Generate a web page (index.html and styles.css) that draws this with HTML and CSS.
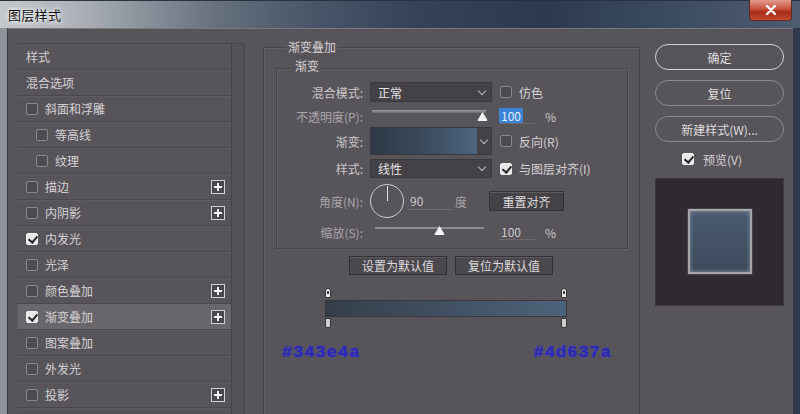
FILE: index.html
```html
<!DOCTYPE html>
<html lang="zh">
<head>
<meta charset="utf-8">
<title>图层样式</title>
<link rel="stylesheet" href="styles.css">
</head>
<body>
<div class="win">
  <div class="titlebar">
    <span class="title">图层样式</span>
    <span class="close"><svg width="12" height="10" viewBox="0 0 12 10"><path d="M2 1 L10 9 M10 1 L2 9" stroke="#fff" stroke-width="2.4" stroke-linecap="round"/></svg></span>
  </div>
  <div class="frame">
    <div class="dlg">
      <div class="leftpane">
        <div class="list">
          <div class="row plain">样式</div>
          <div class="row plain">混合选项</div>
          <div class="row"><span class="cb"></span><span>斜面和浮雕</span></div>
          <div class="row sub"><span class="cb"></span><span>等高线</span></div>
          <div class="row sub"><span class="cb"></span><span>纹理</span></div>
          <div class="row"><span class="cb"></span><span>描边</span><span class="plus"></span></div>
          <div class="row"><span class="cb"></span><span>内阴影</span><span class="plus"></span></div>
          <div class="row"><span class="cb on"></span><span>内发光</span></div>
          <div class="row"><span class="cb"></span><span>光泽</span></div>
          <div class="row"><span class="cb"></span><span>颜色叠加</span><span class="plus"></span></div>
          <div class="row sel"><span class="cb on"></span><span>渐变叠加</span><span class="plus"></span></div>
          <div class="row"><span class="cb"></span><span>图案叠加</span></div>
          <div class="row"><span class="cb"></span><span>外发光</span></div>
          <div class="row"><span class="cb"></span><span>投影</span><span class="plus"></span></div>
        </div>
        <div class="track"></div>
      </div>

      <div class="main">
        <div class="legend outer-legend">渐变叠加</div>
        <div class="inner">
          <div class="legend inner-legend">渐变</div>
          <div class="form">
            <div class="lbl r1">混合模式:</div>
            <div class="select r1"><span>正常</span><span class="chev"></span></div>
            <div class="opt r1"><span class="cb"></span><span>仿色</span></div>

            <div class="lbl r2">不透明度(P):</div>
            <div class="slider r2"><span class="rail"></span><span class="thumb thumb-op"></span></div>
            <div class="num r2"><span class="numfield"><span class="hl">100</span></span><span class="pct">%</span></div>

            <div class="lbl r3">渐变:</div>
            <div class="gradsel r3"><span class="swatch"></span><span class="gdrop"><span class="chev"></span></span></div>
            <div class="opt r3"><span class="cb"></span><span>反向(R)</span></div>

            <div class="lbl r4">样式:</div>
            <div class="select r4"><span>线性</span><span class="chev"></span></div>
            <div class="opt r4"><span class="cb on"></span><span>与图层对齐(I)</span></div>

            <div class="lbl r5">角度(N):</div>
            <div class="angle r5">
              <span class="dial"><span class="hand"></span></span>
              <span class="anginput">90</span>
              <span class="deg">度</span>
              <span class="btn reset">重置对齐</span>
            </div>

            <div class="lbl r6">缩放(S):</div>
            <div class="slider r6"><span class="rail thin"></span><span class="thumb thumb-sc"></span></div>
            <div class="num r6"><span class="numfield plainnum">100</span><span class="pct">%</span></div>
          </div>
        </div>
        <div class="btnrow">
          <span class="btn def">设置为默认值</span>
          <span class="btn def">复位为默认值</span>
        </div>
        <div class="gradient">
          <div class="stops top"><span class="stop"></span><span class="stop"></span></div>
          <div class="bar"></div>
          <div class="stops bottom"><span class="stop"></span><span class="stop"></span></div>
        </div>
        <div class="hexrow"><span>#343e4a</span><span>#4d637a</span></div>
      </div>

      <div class="side">
        <span class="pill primary">确定</span>
        <span class="pill">复位</span>
        <span class="pill">新建样式(W)...</span>
        <div class="preview-opt"><span class="cb on"></span><span>预览(V)</span></div>
        <div class="preview"><span class="sample"></span></div>
      </div>
    </div>
  </div>
</div>
</body>
</html>
```
FILE: styles.css
```css
* { box-sizing: border-box; }
html, body { margin: 0; padding: 0; }
body {
  width: 800px; height: 414px; overflow: hidden;
  font-family: "Noto Sans CJK SC", "Noto Sans", sans-serif;
  font-size: 12px; color: #d4d2d4;
}
.win { width: 800px; height: 414px; display: flex; flex-direction: column; background: #3a4656; }
.titlebar {
  height: 28px; flex: none; display: flex; align-items: center; justify-content: space-between;
  background: linear-gradient(90deg, #c4c7cc 0%, #b0b4ba 9%, #8a919b 18%, #66707e 27%, #4b586a 38%, #34435a 52%, #2b3a50 68%, #3b4b62 84%, #4e5c70 100%);
  border-top: 1px solid #2a3240;
}
.title {
  margin-left: 8px; font-size: 13px; color: #111; letter-spacing: 0.3px;
  text-shadow: 0 0 6px #fff, 0 0 3px #fff;
}
.close {
  align-self: flex-start; margin-right: 8px; margin-top: -1px; width: 43px; height: 21px;
  display: flex; align-items: center; justify-content: center;
  background: linear-gradient(180deg, #e29a8c 0%, #c9503c 45%, #a82a18 60%, #c24a30 100%);
  border: 1px solid #5a2a26; border-top: none; border-radius: 0 0 4px 4px;
}
.frame { flex: 1; display: flex; border-left: 7px solid #8f949c; border-right: 7px solid #2f3b4c; min-height: 0; }
.dlg {
  flex: 1; display: flex; align-items: flex-start; background: #58555a;
  border-top: 1px solid #7a777c; border-left: 1px solid #3e3b40;
  padding: 14px 0 0 10px; overflow: hidden;
}

/* left list */
.leftpane { width: 227px; flex: none; display: flex; border-top: 1px solid #4a474c; }
.list { width: 214px; border-right: 1px solid #48454a; }
.track { flex: 1; height: 380px; border-right: 1px solid #48454a; background: #555257; }
.row {
  height: 26px; display: flex; align-items: center; gap: 7px; padding-left: 8px; padding-right: 6px;
  border-bottom: 1px solid #4b484d; box-shadow: 0 1px 0 #5f5c61;
}
.row.sub { padding-left: 18px; }
.row.sel { background: #6a676c; }
.plus {
  margin-left: auto; width: 14px; height: 14px; border: 1px solid #d0d0d0; background: #4c494e;
  position: relative;
}
.plus::before, .plus::after { content: ""; position: absolute; background: #f2f2f2; }
.plus::before { left: 2px; right: 2px; top: 5px; height: 2px; }
.plus::after { top: 2px; bottom: 2px; left: 5px; width: 2px; }

.cb {
  width: 12px; height: 12px; flex: none; border: 1px solid #8c898e; background: #4e4b50; border-radius: 2px;
  display: inline-block; position: relative;
}
.cb.on { background: #e8e8e8; border-color: #f0f0f0; }
.cb.on::after {
  content: ""; position: absolute; left: 3px; top: 0px; width: 4px; height: 7px;
  border: solid #2a282c; border-width: 0 2px 2px 0; transform: rotate(40deg);
}

/* main group */
.main {
  width: 377px; flex: none; margin-left: 18px; margin-top: 4px; height: 400px;
  border: 1px solid #48454a; border-bottom: none; box-shadow: inset 1px 1px 0 #636065;
  padding: 20px 11px 0 12px;
}
.legend { background: #58555a; display: inline-block; padding: 0 2px; line-height: 16px; }
.outer-legend { margin: -29px 0 13px 10px; display: block; width: max-content; }
.inner {
  width: 352px; height: 181px; border: 1px solid #48454a; box-shadow: 1px 1px 0 #636065, inset 1px 1px 0 #636065;
}
.inner-legend { display: block; width: max-content; margin: -11px 0 0 16px; }
.form {
  display: grid; grid-template-columns: 86px 122px 1fr; column-gap: 7px;
  grid-template-rows: 20px 6px 16px 3px 28px 4px 19px 6px 34px 6px 16px;
  margin-top: 8px;
}
.r1 { grid-row: 1; } .r2 { grid-row: 3; } .r3 { grid-row: 5; } .r4 { grid-row: 7; }
.r5 { grid-row: 9; } .r6 { grid-row: 11; }
.lbl { grid-column: 1; text-align: right; align-self: center; color: #c9c7ca; white-space: nowrap; }
.lbl.r2, .lbl.r5, .lbl.r6 { color: #a9a6aa; }
.select {
  grid-column: 2; display: flex; align-items: center; justify-content: space-between;
  background: #454247; border: 1px solid #3c393e; padding: 0 6px 0 7px; color: #e4e2e4;
}
.chev { width: 6px; height: 6px; border: solid #bdbabd; border-width: 0 1.5px 1.5px 0; transform: rotate(45deg); margin-top: -3px; }
.opt { grid-column: 3; display: flex; align-items: center; gap: 7px; padding-left: 1px; }
.slider { grid-column: 2; position: relative; }
.rail { position: absolute; left: 2px; right: 6px; top: 2px; height: 3px; background: linear-gradient(180deg, #9c999e, #6e6b70); }
.rail.thin { top: 3px; height: 2px; left: 5px; right: 8px; background: #8e8b90; }
.thumb {
  position: absolute; width: 11px; height: 9px; background: #f4f4f4; top: 4px;
  clip-path: polygon(50% 0, 100% 100%, 0 100%); border-radius: 2px;
}
.thumb-op { left: 107px; }
.thumb-sc { left: 64px; top: 2px; }
.num { grid-column: 3; display: flex; align-items: center; }
.numfield { width: 38px; height: 16px; border-bottom: 1px solid #6d6a6f; display: flex; align-items: center; }
.hl { background: #3f83d6; color: #dff0ff; padding: 0 2px; line-height: 15px; }
.plainnum { padding-left: 2px; color: #c9c7ca; }
.pct { margin-left: 8px; color: #c9c7ca; }
.gradsel { grid-column: 2; display: flex; border: 1px solid #3a373c; }
.swatch { flex: 1; background: linear-gradient(90deg, #2e3846 0%, #3b4a5c 50%, #4d6580 100%); }
.gdrop { width: 14px; background: #454247; display: flex; align-items: center; justify-content: center; }
.angle { grid-column: 2 / span 2; display: flex; align-items: center; }
.dial { width: 34px; height: 34px; border: 1px solid #cfcdd0; border-radius: 50%; position: relative; flex: none; }
.hand { position: absolute; left: 15.5px; top: 1px; width: 1px; height: 15px; background: #e0e0e0; }
.anginput { margin-left: 4px; width: 44px; height: 17px; border-bottom: 1px solid #6d6a6f; padding-left: 2px; color: #c9c7ca; line-height: 16px; }
.deg { margin-left: 3px; color: #a9a6aa; }
.btn {
  display: flex; align-items: center; justify-content: center; color: #dcdadc;
  background: #454247; border: 1px solid #343136; box-shadow: inset 0 1px 0 #5e5b60;
}
.reset { margin-left: 22px; width: 75px; height: 20px; }
.btnrow { display: flex; justify-content: center; gap: 8px; margin-top: 7px; padding-right: 2px; }
.def { width: 98px; height: 19px; background: #4b484d; }

.gradient { margin: 13px 0 0 49px; width: 242px; }
.stops { display: flex; justify-content: space-between; height: 10px; }
.stops.top { margin-bottom: 2px; }
.stops.bottom { margin-top: 1px; }
.stop { width: 6px; height: 10px; background: #e8e8e8; border-radius: 3px 3px 1px 1px; border: 1px solid #333; position: relative; }
.stops.top .stop::after { content: ""; position: absolute; left: 1px; top: 2px; width: 2px; height: 3px; background: #111; border-radius: 50%; }
.stops.bottom .stop { background: #cfcfcf; border-radius: 1px 1px 2px 2px; }
.bar { height: 17px; background: linear-gradient(90deg, #343e4a, #4d637a); border: 1px solid #3a373c; }

.hexrow {
  display: flex; justify-content: space-between; margin: 15px 0 0 6px; width: 330px;
  font-family: "Liberation Mono", monospace; font-weight: bold; font-size: 17px; letter-spacing: 1px;
  color: #2b28b8; text-shadow: 0 0 2px #3b3bd0;
}

/* side */
.side { width: 129px; flex: none; margin-left: 15px; display: flex; flex-direction: column; margin-top: 1px; }
.pill {
  height: 26px; border: 1.5px solid #8d8a8f; border-radius: 13px; display: flex; align-items: center; justify-content: center;
  color: #dedcde; margin-bottom: 10px;
}
.pill.primary { border-color: #d4d2d4; }
.preview-opt { display: flex; align-items: center; gap: 9px; margin: 1px 0 0 27px; height: 12px; }
.preview {
  margin-top: 13px; height: 128px; background: #2e2a30; border: 1px solid #3c393e;
  display: flex; align-items: center; justify-content: center;
}
.sample {
  width: 64px; height: 65px; margin-top: -1px;
  background: linear-gradient(180deg, #4a5a6e 0%, #3c4a5c 100%);
  border: 2px solid #a5a4a8; box-shadow: inset 0 0 4px #8a96a6, 0 0 2px #777;
}
```
